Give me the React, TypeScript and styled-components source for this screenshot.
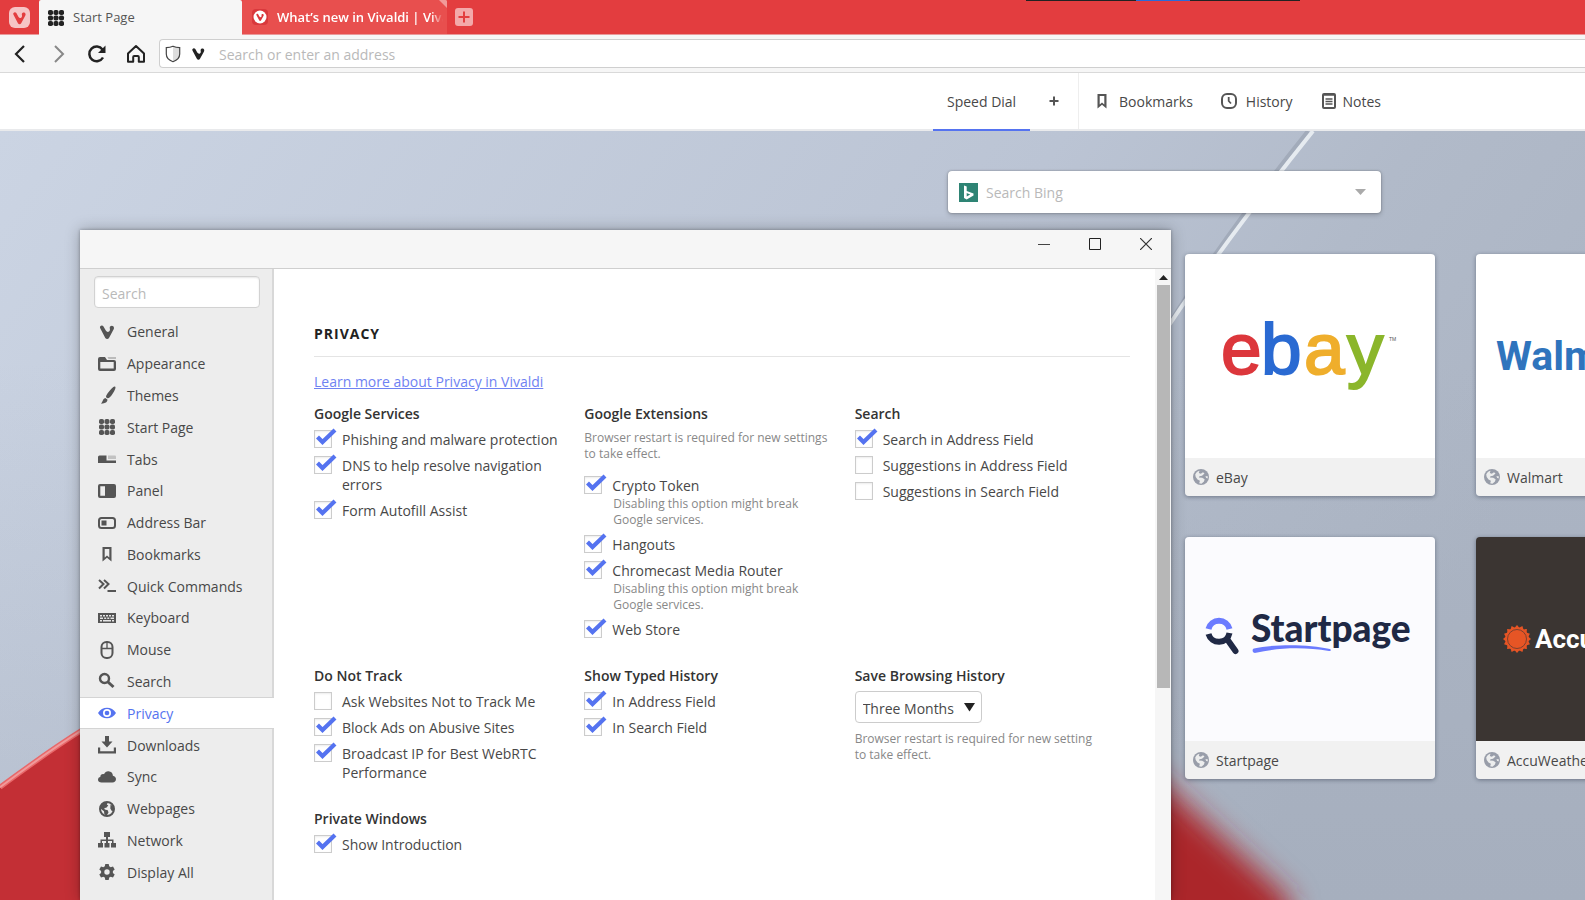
import React from 'react';
import styled, { createGlobalStyle, css } from 'styled-components';

const GlobalStyle = createGlobalStyle`
  *, *::before, *::after { box-sizing: border-box; }
  html, body, #root { height: 100%; margin: 0; }
  body { overflow: hidden; font-family: "Open Sans", "Noto Sans", sans-serif; font-size: 14px; line-height: 19px; color: #484848; background: #fff; }
  button, input, select { font: inherit; color: inherit; }
  button { border: 0; background: none; padding: 0; cursor: pointer; }
`;

const ACCENT = '#5573f0';

/* ---------- browser chrome ---------- */

const Page = styled.div`
  display: flex;
  flex-direction: column;
  min-height: 100vh;
  height: 100%;
  position: relative;
  overflow: hidden;
`;

const TabStrip = styled.div`
  display: flex;
  flex: none;
  height: 35px;
  background: #e33d3f;
  border-bottom: 1px solid #e9999a;
`;

const MenuButton = styled.button`
  display: grid;
  place-items: center;
  width: 39px;
  height: 34px;
`;

const Tab = styled.button<{ $active?: boolean }>`
  display: flex;
  align-items: center;
  gap: 8px;
  width: ${p => (p.$active ? 203 : 205)}px;
  height: ${p => (p.$active ? 35 : 34)}px;
  padding: 0 0 0 ${p => (p.$active ? 8 : 9)}px;
  color: ${p => (p.$active ? '#555' : '#fff')};
  background: ${p => (p.$active ? '#f6f6f6' : '#e84f4e')};
  font-size: 13px;
  font-weight: ${p => (p.$active ? 400 : 600)};
  border-radius: 2px 2px 0 0;
  text-align: left;
  position: relative;
  overflow: hidden;
`;

const TabTitle = styled.span<{ $fade?: boolean }>`
  flex: 1;
  min-width: 0;
  margin-right: 4px;
  overflow: hidden;
  white-space: nowrap;
  ${p => p.$fade && css`mask-image: linear-gradient(90deg, #000 93%, transparent);`}
`;

const TabCorner = styled.span`
  position: absolute;
  top: 0;
  right: 0;
  border: 4px solid transparent;
  border-top-color: #f19a99;
  border-right-color: #f19a99;
`;

const NewTab = styled.button`
  display: grid;
  place-items: center;
  width: 34px;
  height: 34px;
`;

const TopSliver = styled.div`
  position: absolute;
  top: 0;
  right: 285px;
  width: 274px;
  height: 1px;
  background: linear-gradient(90deg, #222 40%, #2a6bd8 40%, #2a6bd8 60%, #222 60%);
`;

const Toolbar = styled.div`
  display: flex;
  align-items: center;
  flex: none;
  height: 38px;
  background: #f6f6f6;
  border-bottom: 1px solid #d9d9d9;
`;

const ToolButtons = styled.div`
  display: flex;
  width: 158px;
`;

const ToolButton = styled.button`
  display: grid;
  flex: none;
  place-items: center;
  width: 39px;
  height: 38px;
  padding-right: 2px;
`;

const AddressField = styled.div`
  display: flex;
  align-items: center;
  flex: 1;
  height: 29px;
  margin-left: 1px;
  padding-left: 5px;
  gap: 9px;
  background: #fff;
  border: 1px solid #cfcfcf;
  border-right: 0;
  border-radius: 4px 0 0 4px;
`;

const PlainInput = styled.input`
  flex: 1;
  min-width: 0;
  border: 0;
  outline: 0;
  padding: 0;
  background: none;
  &::placeholder { color: #b9b9b9; opacity: 1; }
`;

const AddressInput = styled(PlainInput)`
  padding: 2px 0 0 4px;
`;

/* ---------- start page ---------- */

const StartNav = styled.nav`
  display: flex;
  flex: none;
  justify-content: flex-end;
  height: 58px;
  padding-right: 204px;
  background: #fff;
  border-bottom: 2px solid #e9eaec;
`;

const NavTabs = styled.div`
  display: flex;
  border-right: 1px solid #eee;
`;

const NavTab = styled.button`
  width: 97px;
  margin-bottom: -2px;
  border-bottom: 2px solid ${ACCENT};
`;

const NavAdd = styled.button`
  display: grid;
  place-items: center;
  width: 48px;
`;

const NavLinks = styled.div`
  display: flex;
  gap: 27px;
  padding-left: 14px;
`;

const NavLink = styled.a<{ $gap: number }>`
  display: flex;
  align-items: center;
  gap: ${p => p.$gap}px;
  color: inherit;
  text-decoration: none;
`;

const StartPage = styled.main`
  position: relative;
  flex: 1;
  min-height: 0;
  overflow: hidden;
  background: #b4bdcc;
`;

const Wallpaper = styled.svg`
  position: absolute;
  inset: 0;
  width: 100%;
  height: 100%;
`;

const StartContent = styled.div`
  position: relative;
  display: flex;
  flex-direction: column;
  padding-top: 40px;
`;

const EngineSearch = styled.div`
  display: flex;
  align-items: center;
  align-self: flex-end;
  width: 433px;
  height: 42px;
  margin-right: 204px;
  padding: 0 15px 0 11px;
  gap: 8px;
  background: #fff;
  border-radius: 4px;
  box-shadow: 0 0 2px rgba(0, 0, 0, .35), 0 2px 5px rgba(0, 0, 0, .2);
`;

const EngineMenu = styled.button`
  display: grid;
  place-items: center;
`;

const Dials = styled.div`
  display: grid;
  grid-template-columns: 250px 250px;
  gap: 41px;
  margin-top: 41px;
  padding-left: calc(100% - 400px);
`;

const Dial = styled.a`
  display: flex;
  flex-direction: column;
  height: 242px;
  border-radius: 4px;
  overflow: hidden;
  color: inherit;
  text-decoration: none;
  box-shadow: 0 1px 4px rgba(30, 40, 60, .45);
`;

const DialImage = styled.div<{ $bg: string }>`
  flex: 1;
  background: ${p => p.$bg};
`;

const DialTitle = styled.div`
  display: flex;
  align-items: center;
  gap: 6px;
  height: 38px;
  padding-left: 7px;
  background: #f1f1f1;
`;

/* ---------- settings window ---------- */

const SettingsWindow = styled.section`
  position: absolute;
  top: 99px;
  bottom: 0;
  left: 80px;
  right: 414px;
  display: flex;
  flex-direction: column;
  background: #fff;
  box-shadow: 0 0 3px rgba(0, 0, 0, .3), 0 0 14px rgba(0, 0, 0, .28);
`;

const TitleBar = styled.header`
  display: flex;
  justify-content: flex-end;
  flex: none;
  height: 39px;
  background: #f6f6f6;
  border-bottom: 1px solid #cfcfcf;
`;

const WindowButton = styled.button`
  display: grid;
  place-items: center;
  width: 51px;
  height: 28px;
`;

const WindowBody = styled.div`
  display: flex;
  flex: 1;
  min-height: 0;
`;

const Sidebar = styled.aside`
  flex: none;
  width: 194px;
  padding-top: 7px;
  background: linear-gradient(90deg, #ededed 192px, #d8d8d8 192px);
`;

const SidebarSearch = styled.input`
  display: block;
  width: 166px;
  height: 32px;
  margin-left: 14px;
  padding: 2px 7px 0;
  background: #fff;
  border: 1px solid #d2d2d2;
  border-radius: 4px;
  box-shadow: inset 0 1px 2px rgba(0, 0, 0, .1);
  outline: 0;
  &::placeholder { color: #b9b9b9; opacity: 1; }
`;

const CategoryList = styled.nav`
  display: flex;
  flex-direction: column;
  height: 572px;
  margin-top: 8px;
`;

const Category = styled.button<{ $active?: boolean }>`
  display: flex;
  flex: 1;
  align-items: center;
  gap: 11px;
  padding-left: 18px;
  border: solid transparent;
  border-width: 1px 0;
  ${p => p.$active && css`
    color: ${ACCENT};
    background: #fff;
    border-color: #d4d4d4;
  `}
`;

const IconBox = styled.svg<{ $tone?: string }>`
  flex: none;
  display: block;
  color: ${p => p.$tone || '#555'};
`;

const Panel = styled.div`
  flex: 1;
  min-width: 0;
  padding: 0 25px 0 40px;
  overflow: hidden;
`;

const PanelTitle = styled.h1`
  margin: 0;
  padding: 55px 0 13px;
  border-bottom: 1px solid #e4e4e4;
  font-size: 14px;
  line-height: 19px;
  font-weight: 700;
  letter-spacing: 1px;
  color: #222;
`;

const LearnMore = styled.a`
  display: block;
  margin-top: 15px;
  color: #6f82f2;
`;

const Groups = styled.div`
  display: grid;
  grid-template-columns: repeat(3, 1fr);
  row-gap: 27px;
  margin-top: 13px;
  padding-right: 5px;
`;

const GroupBox = styled.fieldset`
  min-width: 0;
  margin: 0;
  padding: 0 22px 0 0;
  border: 0;
`;

const GroupTitle = styled.legend`
  padding: 0;
  font-weight: 600;
  color: #333;
`;

const Options = styled.div<{ $tight?: boolean }>`
  display: flex;
  flex-direction: column;
  gap: ${p => (p.$tight ? 8 : 7)}px;
  margin-top: ${p => (p.$tight ? 6 : 7)}px;
`;

const Option = styled.div`
  display: grid;
  grid-template-columns: 19px 1fr;
  column-gap: 9px;
`;

const CheckCell = styled.span`
  position: relative;
  height: 19px;
`;

const CheckInput = styled.input`
  appearance: none;
  display: block;
  width: 18px;
  height: 18px;
  margin: 0;
  background: #fff;
  border: 1px solid #ccc;
  box-shadow: inset 0 1px 2px rgba(0, 0, 0, .08);
  & + svg { display: none; }
  &:checked + svg { display: block; }
`;

const CheckMark = styled.svg`
  position: absolute;
  left: 0;
  top: -3px;
  pointer-events: none;
`;

const Hint = styled.p<{ $inset?: boolean }>`
  margin: 0;
  grid-column: ${p => (p.$inset ? 2 : 'auto')};
  padding: ${p => (p.$inset ? '1px 0 0 1px' : 0)};
  font-size: 12px;
  line-height: 16px;
  color: #888;
`;

const IntroHint = styled(Hint)`
  padding: 0 0 7px;
`;

const SelectBox = styled.span`
  position: relative;
  display: block;
  width: 127px;
`;

const SelectArrow = styled.svg`
  position: absolute;
  right: 7px;
  top: 12px;
  pointer-events: none;
`;

const Select = styled.select`
  appearance: none;
  display: block;
  width: 100%;
  height: 32px;
  padding: 2px 7px 0;
  background: #fff;
  border: 1px solid #ccc;
  border-radius: 4px;
`;

const ScrollTrack = styled.div`
  display: flex;
  flex-direction: column;
  flex: none;
  gap: 4px;
  width: 16px;
  padding: 5px 1px 0 2px;
  background: #f6f6f6;
`;

const ScrollThumb = styled.div`
  height: 403px;
  background: #b7b7b7;
`;

/* ---------- icons ---------- */

const V_PATH = 'M1.1 4C.2 1.8 3.3.4 4.5 2.4l2.3 4.2c1.1 1.9 3.3 1.7 4-.1.4-1.1-.1-1.9-.1-2.7.1-2.6 4.2-2.7 4.3.2 0 .7-.3 1.3-.6 1.8L10 13.9c-.8 1.4-2.9 1.4-3.7 0z';

const shapes: Record<string, React.ReactNode> = {
  general: <path d={V_PATH} transform="translate(1 1)" fill="currentColor" />,
  appearance: (
    <>
      <path d="M0 16V4q0-2 2-2h5l2 3h7q2 0 2 2v7q0 2-2 2H2q-2 0-2-2zM2.300 7v6.500h13.400V7z" fillRule="evenodd" fill="currentColor" />
      <path d="M9.500 2H18v2h-7.500z" fill="#bbb" />
    </>
  ),
  themes: <path d="M17 .6c.7.500.6 1.400.1 2.600-1.200 2.800-3.500 6.500-5.600 8.300-.8.700-1.600.9-2.500.4-1-.5-1.200-1.600-.7-2.500C9.700 6.900 13 2.900 15.300 1c.7-.5 1.200-.7 1.700-.4zM7.300 12.100l2.100 1.500c.3 2.300-1.800 4-6.400 4.100 1.700-1.200 1.500-4.800 4.300-5.600z" fill="currentColor" />,
  grid: (
    <g fill="currentColor">
      {[1, 6.5, 12].map(x => [1, 6.5, 12].map(y => <rect key={`${x}-${y}`} x={x} y={y} width="5" height="5" rx="1.8" />))}
    </g>
  ),
  tabs: (
    <>
      <path d="M0 13V7q0-1.500 1.500-1.500h7v5H18V13z" fill="currentColor" />
      <path d="M10 5.500h7q1 0 1 1V9h-8z" fill="#c2c2c2" />
    </>
  ),
  panel: <path d="M2 2h14q2 0 2 2v10q0 2-2 2H2q-2 0-2-2V4q0-2 2-2zm.3 2.300v9.400H7V4.300z" fillRule="evenodd" fill="currentColor" />,
  address: (
    <>
      <rect x="1" y="4" width="16" height="10" rx="2.500" fill="none" stroke="currentColor" strokeWidth="2" />
      <rect x="3.500" y="6.500" width="5" height="5" fill="currentColor" />
    </>
  ),
  bookmark: <path d="M4.500 2h9v14.500L9 12.800l-4.500 3.700zm2.200 2v8.400L9 10.400l2.300 2V4z" fillRule="evenodd" fill="currentColor" />,
  commands: <path d="M1 3l4.500 4L1 11.500M6 3l4.500 4L6 11.500M9.500 14H18" fill="none" stroke="currentColor" strokeWidth="2" />,
  keyboard: (
    <>
      <path d="M0 4h18v10H0z" fill="currentColor" />
      <path d="M2 6h2v1.500H2zM5 6h2v1.500H5zM8 6h2v1.500H8zM11 6h2v1.500h-2zM14 6h2v1.500h-2zM2 8.500h3V10H2zM6.200 8.500h2V10h-2zM9.300 8.500h2V10h-2zM12.500 8.500H16V10h-3.500zM2 11h2v1.500H2zM5 11h8v1.500H5zM14 11h2v1.500h-2z" fill="#e6e6e6" />
    </>
  ),
  mouse: (
    <>
      <rect x="3.500" y="1" width="11" height="16" rx="5" fill="none" stroke="currentColor" strokeWidth="2" />
      <path d="M4 7.500h10M9 2v5.500" stroke="currentColor" strokeWidth="1.300" />
    </>
  ),
  search: (
    <>
      <circle cx="6.500" cy="6.500" r="4.500" fill="none" stroke="currentColor" strokeWidth="2.400" />
      <path d="M10 10l5.500 5" stroke="currentColor" strokeWidth="3" />
    </>
  ),
  eye: (
    <>
      <path d="M0 9c4-7 14-7 18 0-4 7-14 7-18 0zm9-4a4 4 0 1 0 0 8 4 4 0 1 0 0-8z" fillRule="evenodd" fill="currentColor" />
      <circle cx="9" cy="9" r="2.300" fill="currentColor" />
    </>
  ),
  downloads: <path d="M7 0h4v5.500h3.500L9 11.500 3.500 5.500H7zM0 11.500h2.200v3.700h13.600v-3.700H18v6H0z" fill="currentColor" />,
  cloud: <path d="M3.500 14.500C1.500 14.500 0 13.400 0 11.700c0-1.500 1-2.500 2.300-2.700C2.200 6.900 4.200 5.500 6 6.200c.9-2 2.500-3 4.500-2.900 2.700.1 4.400 2 4.400 4.400 1.900.3 3.100 1.600 3.100 3.400 0 2-1.500 3.400-3.500 3.400z" fill="currentColor" />,
  globe: (
    <>
      <circle cx="9" cy="9" r="7" fill="none" stroke="currentColor" strokeWidth="2" />
      <path d="M3 5l3-3 4 .3-1.200 2.200 1.500 1-2 2.300-2 .3.500 1.500 3 .6.700 2.300-2 3.500-2.200-2-.3-2.700L3 9zM12.500 4.500l3.200 2.300.2 4-2.100.3-1.500-2.500z" fill="currentColor" />
    </>
  ),
  globeSolid: (
    <>
      <circle cx="9" cy="9" r="8" fill="currentColor" />
      <path d="M3.200 6.500C4 4.600 5.500 3.300 7.500 2.800L6.800 5l2 .8L11 4.200l1.500 1.300L10 7.800l-2.500.4-.6 1.300 3.300.3 2.400 1.400-.6 2.300-2.600 2.200-2.200-.4.700-2.600-2.400-1.200-1.800-2.400z" fill="#eceded" />
      <path d="M13.500 8l2.500.5-.5 2-1.500-.8z" fill="#eceded" />
    </>
  ),
  network: <path d="M6 1h6v5h-2v2.500h5.500V12H18v4.500h-5V12h1V10h-4v2h1.500v4.500h-5V12H8v-2H4v2h1v4.500H0V12h2.500V8.500H8V6H6z" fill="currentColor" />,
  gear: (
    <path fillRule="evenodd" fill="currentColor" d="M7.300 1h3.400l.5 2.300 1.500.9 2.300-.8 1.700 3-1.800 1.600v1.900l1.800 1.600-1.700 3-2.300-.8-1.500.9-.5 2.400H7.300l-.5-2.400-1.500-.9-2.300.8-1.700-3L3.100 9.900V8L1.300 6.400l1.700-3 2.300.8 1.500-.9zM9 6.300a2.700 2.700 0 1 0 0 5.400 2.700 2.700 0 1 0 0-5.400z" />
  ),
  history: (
    <>
      <rect x="2" y="2" width="14" height="14" rx="5" fill="none" stroke="currentColor" strokeWidth="2" />
      <path d="M8.700 5v4l2.300 2.500" fill="none" stroke="currentColor" strokeWidth="1.800" />
    </>
  ),
  notes: (
    <>
      <rect x="3" y="2" width="12" height="14" rx="1" fill="none" stroke="currentColor" strokeWidth="2" />
      <path d="M3 3h12M5.500 7h7M5.500 9.500h7M5.500 12h7" stroke="currentColor" strokeWidth="1.600" />
    </>
  ),
  plus: <path d="M9 4.500v9M4.500 9h9" stroke="currentColor" strokeWidth="2" />,
};

const Icon = ({ name, size = 18, tone }: { name: string; size?: number; tone?: string }) => (
  <IconBox width={size} height={size} viewBox="0 0 18 18" $tone={tone} aria-hidden="true">
    {shapes[name]}
  </IconBox>
);

/* ---------- data ---------- */

const categories: [string, string][] = [
  ['General', 'general'], ['Appearance', 'appearance'], ['Themes', 'themes'], ['Start Page', 'grid'],
  ['Tabs', 'tabs'], ['Panel', 'panel'], ['Address Bar', 'address'], ['Bookmarks', 'bookmark'],
  ['Quick Commands', 'commands'], ['Keyboard', 'keyboard'], ['Mouse', 'mouse'], ['Search', 'search'],
  ['Privacy', 'eye'], ['Downloads', 'downloads'], ['Sync', 'cloud'], ['Webpages', 'globe'],
  ['Network', 'network'], ['Display All', 'gear'],
];

type Item = { label: string; on?: boolean; hint?: string };
type GroupData = { title: string; intro?: string; items: Item[] };

const breakHint = 'Disabling this option might break Google services.';

const groups: GroupData[] = [
  {
    title: 'Google Services',
    items: [
      { label: 'Phishing and malware protection', on: true },
      { label: 'DNS to help resolve navigation errors', on: true },
      { label: 'Form Autofill Assist', on: true },
    ],
  },
  {
    title: 'Google Extensions',
    intro: 'Browser restart is required for new settings to take effect.',
    items: [
      { label: 'Crypto Token', on: true, hint: breakHint },
      { label: 'Hangouts', on: true },
      { label: 'Chromecast Media Router', on: true, hint: breakHint },
      { label: 'Web Store', on: true },
    ],
  },
  {
    title: 'Search',
    items: [
      { label: 'Search in Address Field', on: true },
      { label: 'Suggestions in Address Field' },
      { label: 'Suggestions in Search Field' },
    ],
  },
  {
    title: 'Do Not Track',
    items: [
      { label: 'Ask Websites Not to Track Me' },
      { label: 'Block Ads on Abusive Sites', on: true },
      { label: 'Broadcast IP for Best WebRTC Performance', on: true },
    ],
  },
  {
    title: 'Show Typed History',
    items: [
      { label: 'In Address Field', on: true },
      { label: 'In Search Field', on: true },
    ],
  },
];

const CheckOption = ({ label, on, hint }: Item) => {
  const id = React.useId();
  return (
    <Option>
      <CheckCell>
        <CheckInput type="checkbox" id={id} defaultChecked={on} />
        <CheckMark width="23" height="19" viewBox="0 0 23 19">
          <path d="M3.500 10l5 5L21 3" fill="none" stroke={ACCENT} strokeWidth="4.200" />
        </CheckMark>
      </CheckCell>
      <label htmlFor={id}>{label}</label>
      {hint && <Hint $inset>{hint}</Hint>}
    </Option>
  );
};

const Group = ({ title, intro, items }: GroupData) => (
  <GroupBox>
    <GroupTitle>{title}</GroupTitle>
    <Options>
      {intro && <IntroHint>{intro}</IntroHint>}
      {items.map(i => <CheckOption key={i.label} {...i} />)}
    </Options>
  </GroupBox>
);

/* ---------- logos ---------- */

const LogoSvg = styled.svg`
  display: block;
  width: 250px;
  height: 204px;
`;

const EbayLogo = () => (
  <LogoSvg viewBox="0 0 250 204" fontFamily="'Liberation Sans', sans-serif" fontSize="73">
    <text y="120" strokeWidth="2">
      <tspan x="36" fill="#dc373c" stroke="#dc373c">e</tspan>
      <tspan x="76" fill="#2a6ad2" stroke="#2a6ad2">b</tspan>
      <tspan x="119" fill="#efae2c" stroke="#efae2c">a</tspan>
      <tspan x="162" fill="#8bb62b" stroke="#8bb62b">y</tspan>
    </text>
    <text x="204" y="87" fontSize="5" fill="#555">TM</text>
  </LogoSvg>
);

const WalmartLogo = () => (
  <LogoSvg viewBox="0 0 250 204">
    <text x="20" y="116" fontFamily="Roboto, sans-serif" fontSize="41" fontWeight="700" fill="#2f74bd">Walmart</text>
  </LogoSvg>
);

const StartpageLogo = () => (
  <LogoSvg viewBox="0 0 250 204">
    <path d="M23.500 92a10.800 10.800 0 0 1 21 0" fill="none" stroke="#6b7bff" strokeWidth="6" />
    <path d="M23.500 97a10.800 10.800 0 0 0 21-1" fill="none" stroke="#202945" strokeWidth="6" />
    <path d="M42 102l8.500 12" stroke="#202945" strokeWidth="6" strokeLinecap="round" />
    <path d="M69 111.500c20-4.500 55-4.500 76 .5 1.500.6.700 2.400-1 2-24-4-50-3.500-73 1.800-3.500.8-4.500-3.400-2-4.300z" fill="#6b7bff" />
    <text x="66" y="105" fontFamily="Lato, sans-serif" fontSize="37" fontWeight="900" fill="#202945">Startpage</text>
  </LogoSvg>
);

const AccuLogo = () => (
  <LogoSvg viewBox="0 0 250 204">
    <g fill="#e65525" transform="translate(41 102)">
      {Array.from({ length: 16 }, (_, i) => (
        <path key={i} d="M-3-10.500L0-14l3 3.500z" transform={`rotate(${i * 22.5})`} />
      ))}
      <circle r="11.500" />
      <circle r="9.500" fill="none" stroke="#7b4030" strokeWidth="1" />
    </g>
    <text x="59" y="111" fontFamily="Roboto, sans-serif" fontSize="26" fontWeight="700" fill="#fff">AccuWeather</text>
  </LogoSvg>
);

const dials = [
  { title: 'eBay', bg: '#fff', logo: <EbayLogo /> },
  { title: 'Walmart', bg: '#fff', logo: <WalmartLogo /> },
  { title: 'Startpage', bg: '#fbfbfe', logo: <StartpageLogo /> },
  { title: 'AccuWeather', bg: '#3b3532', logo: <AccuLogo /> },
];

const Background = () => (
  <Wallpaper viewBox="0 0 1585 770" preserveAspectRatio="none" aria-hidden="true">
    <defs>
      <linearGradient id="sky" x1="0" y1="0" x2="1" y2="0.35">
        <stop offset="0" stopColor="#cbd4e3" />
        <stop offset="0.6" stopColor="#bbc4d4" />
        <stop offset="0.8" stopColor="#b1bac9" />
        <stop offset="1" stopColor="#acb5c4" />
      </linearGradient>
      <linearGradient id="shade" x1="0" y1="0" x2="0" y2="1">
        <stop offset="0.3" stopColor="#98a1b0" stopOpacity="0" />
        <stop offset="1" stopColor="#98a1b0" stopOpacity=".3" />
      </linearGradient>
      <filter id="soft" x="-20%" y="-20%" width="140%" height="140%"><feGaussianBlur stdDeviation="14" /></filter>
    </defs>
    <path d="M0 0h1585v770H0z" fill="url(#sky)" />
    <path d="M0 0h1585v770H0z" fill="url(#shade)" />
    <path d="M1308 0Q1220 110 1166 198" fill="none" stroke="#a2abba" strokeWidth="4" />
    <path d="M1313 0Q1225 110 1168 196" fill="none" stroke="#e6ebf0" strokeWidth="4" />
    <path d="M0 657Q50 620 82 600V770H0z" fill="#c32f35" />
    <path d="M0 657Q50 620 82 600" fill="none" stroke="#e8686a" strokeWidth="5" />
    <path d="M0 657Q50 620 82 600" fill="none" stroke="#f09a9b" strokeWidth="2" />
    <path d="M1100 600L1170 660L1290 770V840H1100z" fill="#ab262b" filter="url(#soft)" />
  </Wallpaper>
);

export default function App() {
  return (
    <Page>
      <GlobalStyle />
      <TabStrip>
        <MenuButton aria-label="Vivaldi menu">
          <svg width="21" height="21" viewBox="0 0 21 21">
            <rect width="21" height="21" rx="6" fill="#f6c4c5" />
            <path d={V_PATH} transform="translate(3.400 4) scale(.88)" fill="#e33d3f" />
          </svg>
        </MenuButton>
        <Tab $active>
          <Icon name="grid" tone="#222" />
          <TabTitle>Start Page</TabTitle>
        </Tab>
        <Tab>
          <svg width="18" height="18" viewBox="0 0 18 18">
            <rect x="1" y="1" width="16" height="16" rx="4" fill="#d9383c" />
            <circle cx="9" cy="9" r="6.500" fill="#fff" />
            <path d={V_PATH} transform="translate(4.800 5) scale(.53)" fill="#d9383c" />
          </svg>
          <TabTitle $fade>What’s new in Vivaldi | Vivaldi</TabTitle>
          <TabCorner />
        </Tab>
        <NewTab aria-label="New tab">
          <svg width="18" height="18" viewBox="0 0 18 18">
            <rect width="18" height="18" rx="3" fill="#f3a9aa" />
            <path d="M9 3.500v11M3.500 9h11" stroke="#e33d3f" strokeWidth="2" />
          </svg>
        </NewTab>
      </TabStrip>
      <TopSliver />
      <Toolbar>
        <ToolButtons>
          <ToolButton aria-label="Back">
            <svg width="18" height="18" viewBox="0 0 18 18"><path d="M14 1L6 9l8 8" fill="none" stroke="#222" strokeWidth="2.200" /></svg>
          </ToolButton>
          <ToolButton aria-label="Forward">
            <svg width="18" height="18" viewBox="0 0 18 18"><path d="M6 1l8 8-8 8" fill="none" stroke="#888" strokeWidth="2" /></svg>
          </ToolButton>
          <ToolButton aria-label="Reload">
            <svg width="20" height="20" viewBox="0 0 20 20">
              <path d="M16 13.500A7.300 7.300 0 1 1 15.500 5.500" fill="none" stroke="#222" strokeWidth="2.500" />
              <path d="M18.500 1.500V9H11z" fill="#222" />
            </svg>
          </ToolButton>
          <ToolButton aria-label="Home">
            <svg width="20" height="20" viewBox="0 0 20 20">
              <path d="M2 9.500L10 2l8 7.500v8.300h-5.200V13q0-1-1-1H8.200q-1 0-1 1v4.800H2z" fill="none" stroke="#222" strokeWidth="2" strokeLinejoin="round" />
            </svg>
          </ToolButton>
        </ToolButtons>
        <AddressField>
          <svg width="16" height="18" viewBox="0 0 16 18">
            <path d="M8 1.500l6.500 1.500v6c0 4-3 6.300-6.500 7.500z" fill="#ddd" />
            <path d="M8 1.300C5.500 2.500 3.500 2.700 1.300 2.700V9c0 4 3.200 6.500 6.700 7.700 3.500-1.200 6.700-3.700 6.700-7.700V2.700C12.500 2.700 10.500 2.500 8 1.300z" fill="none" stroke="#444" strokeWidth="1.200" />
          </svg>
          <svg width="16" height="16" viewBox="0 0 16 16"><path d={V_PATH} transform="translate(1.500 1) scale(.85)" fill="#222" /></svg>
          <AddressInput aria-label="Address" placeholder="Search or enter an address" />
        </AddressField>
      </Toolbar>
      <StartNav>
        <NavTabs>
          <NavTab>Speed Dial</NavTab>
          <NavAdd aria-label="Add group"><Icon name="plus" /></NavAdd>
        </NavTabs>
        <NavLinks>
          <NavLink href="#bookmarks" $gap={8}><Icon name="bookmark" />Bookmarks</NavLink>
          <NavLink href="#history" $gap={8}><Icon name="history" />History</NavLink>
          <NavLink href="#notes" $gap={5}><Icon name="notes" />Notes</NavLink>
        </NavLinks>
      </StartNav>
      <StartPage>
        <Background />
        <StartContent>
          <EngineSearch>
            <svg width="19" height="19" viewBox="0 0 19 19">
              <rect width="19" height="19" fill="#2e8474" />
              <path d="M5 2.500l2.700 1v4.500l6.800 2.400v2.200L7.700 16.500 5 15zM7.700 10v3.600l3.500-2.100z" fillRule="evenodd" fill="#fff" />
            </svg>
            <PlainInput aria-label="Search Bing" placeholder="Search Bing" />
            <EngineMenu aria-label="Choose search engine">
              <svg width="11" height="6" viewBox="0 0 11 6"><path d="M0 0h11L5.500 6z" fill="#aaa" /></svg>
            </EngineMenu>
          </EngineSearch>
          <Dials>
            {dials.map(d => (
              <Dial key={d.title} href={`#${d.title}`}>
                <DialImage $bg={d.bg}>{d.logo}</DialImage>
                <DialTitle><Icon name="globeSolid" tone="#989da9" />{d.title}</DialTitle>
              </Dial>
            ))}
          </Dials>
        </StartContent>
        <SettingsWindow aria-label="Settings">
          <TitleBar>
            <WindowButton aria-label="Minimize">
              <svg width="12" height="12" viewBox="0 0 12 12"><path d="M0 6.500h12" stroke="#444" /></svg>
            </WindowButton>
            <WindowButton aria-label="Maximize">
              <svg width="12" height="12" viewBox="0 0 12 12"><path d="M.5.500h11v11H.5z" fill="none" stroke="#222" /></svg>
            </WindowButton>
            <WindowButton aria-label="Close">
              <svg width="12" height="12" viewBox="0 0 12 12"><path d="M0 0l12 12M12 0L0 12" stroke="#333" strokeWidth="1.200" /></svg>
            </WindowButton>
          </TitleBar>
          <WindowBody>
            <Sidebar>
              <SidebarSearch aria-label="Search settings" placeholder="Search" />
              <CategoryList>
                {categories.map(([label, icon]) => (
                  <Category key={label} $active={label === 'Privacy'}>
                    <Icon name={icon} tone={label === 'Privacy' ? ACCENT : undefined} />
                    {label}
                  </Category>
                ))}
              </CategoryList>
            </Sidebar>
            <Panel>
              <PanelTitle>PRIVACY</PanelTitle>
              <LearnMore href="#privacy">Learn more about Privacy in Vivaldi</LearnMore>
              <Groups>
                {groups.map(g => <Group key={g.title} {...g} />)}
                <GroupBox>
                  <GroupTitle>Save Browsing History</GroupTitle>
                  <Options $tight>
                    <SelectBox>
                      <Select aria-label="Save Browsing History" defaultValue="Three Months">
                        <option>Three Months</option>
                      </Select>
                      <SelectArrow width="11" height="9" viewBox="0 0 11 9"><path d="M0 0h11L5.500 8.500z" fill="#222" /></SelectArrow>
                    </SelectBox>
                    <Hint>Browser restart is required for new setting to take effect.</Hint>
                  </Options>
                </GroupBox>
                <Group title="Private Windows" items={[{ label: 'Show Introduction', on: true }]} />
              </Groups>
            </Panel>
            <ScrollTrack aria-hidden="true">
              <svg width="13" height="7" viewBox="0 0 13 7"><path d="M2 6l4.500-5L11 6z" fill="#222" /></svg>
              <ScrollThumb />
            </ScrollTrack>
          </WindowBody>
        </SettingsWindow>
      </StartPage>
    </Page>
  );
}
